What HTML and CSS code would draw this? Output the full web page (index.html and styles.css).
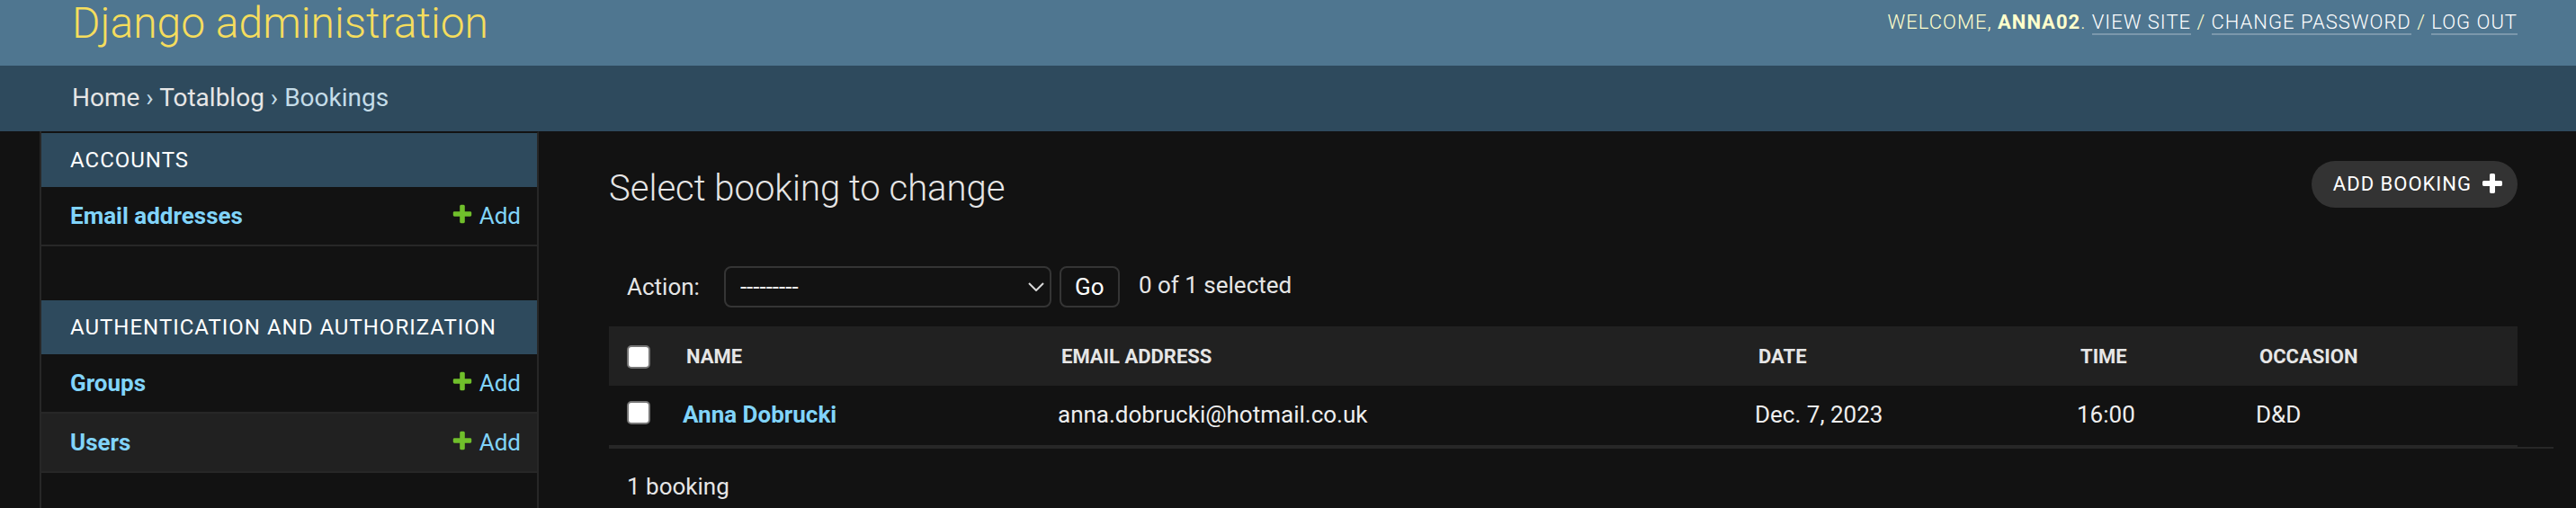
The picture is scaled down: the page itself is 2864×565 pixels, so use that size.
FILE: index.html
```html
<!DOCTYPE html>
<html lang="en">
<head>
<meta charset="utf-8">
<title>Select booking to change | Django site admin</title>
<link rel="stylesheet" href="styles.css">
</head>
<body>
<header class="header">
  <h1 class="site-name">Django administration</h1>
  <div class="user-tools">Welcome, <strong>anna02</strong>. <a href="#">View site</a> / <a href="#">Change password</a> / <a href="#">Log out</a></div>
</header>
<nav class="breadcrumbs"><a href="#">Home</a> &rsaquo; <a href="#">Totalblog</a> &rsaquo; Bookings</nav>
<div class="main">
  <button class="nav-toggle" aria-label="Toggle navigation"></button>
  <aside class="sidebar">
    <section class="module">
      <div class="module-caption">Accounts</div>
      <div class="model-row">
        <a class="model-link" href="#">Email addresses</a>
        <a class="addlink" href="#"><svg class="add-icon" width="26" height="26" viewBox="0 0 1792 1792"><path fill="#70bf2b" d="M1600 796v192q0 40-28 68t-68 28h-416v416q0 40-28 68t-68 28h-192q-40 0-68-28t-28-68v-416h-416q-40 0-68-28t-28-68v-192q0-40 28-68t68-28h416v-416q0-40 28-68t68-28h192q40 0 68 28t28 68v416h416q40 0 68 28t28 68z"/></svg>Add</a>
      </div>
    </section>
    <section class="module">
      <div class="module-caption">Authentication and Authorization</div>
      <div class="model-row">
        <a class="model-link" href="#">Groups</a>
        <a class="addlink" href="#"><svg class="add-icon" width="26" height="26" viewBox="0 0 1792 1792"><path fill="#70bf2b" d="M1600 796v192q0 40-28 68t-68 28h-416v416q0 40-28 68t-68 28h-192q-40 0-68-28t-28-68v-416h-416q-40 0-68-28t-28-68v-192q0-40 28-68t68-28h416v-416q0-40 28-68t68-28h192q40 0 68 28t28 68v416h416q40 0 68 28t28 68z"/></svg>Add</a>
      </div>
      <div class="model-row model-row-alt">
        <a class="model-link" href="#">Users</a>
        <a class="addlink" href="#"><svg class="add-icon" width="26" height="26" viewBox="0 0 1792 1792"><path fill="#70bf2b" d="M1600 796v192q0 40-28 68t-68 28h-416v416q0 40-28 68t-68 28h-192q-40 0-68-28t-28-68v-416h-416q-40 0-68-28t-28-68v-192q0-40 28-68t68-28h416v-416q0-40 28-68t68-28h192q40 0 68 28t28 68v416h416q40 0 68 28t28 68z"/></svg>Add</a>
      </div>
    </section>
  </aside>
  <main class="content">
    <div class="title-row">
      <h1 class="page-title">Select booking to change</h1>
      <a class="object-tool" href="#">Add booking<svg class="tool-icon" width="28" height="28" viewBox="0 0 1792 1792"><path fill="#ffffff" d="M1600 736v192q0 40-28 68t-68 28h-416v416q0 40-28 68t-68 28h-192q-40 0-68-28t-28-68v-416h-416q-40 0-68-28t-28-68v-192q0-40 28-68t68-28h416v-416q0-40 28-68t68-28h192q40 0 68 28t28 68v416h416q40 0 68 28t28 68z"/></svg></a>
    </div>
    <form class="changelist">
      <div class="actions">
        <label class="action-label" for="action">Action:</label>
        <div class="select-wrap">
          <select id="action" class="action-select"><option>---------</option><option>Delete selected bookings</option></select>
          <svg class="chevron" width="18" height="10" viewBox="0 0 18 10"><path d="M1 1l8 8 8-8" fill="none" stroke="#d8d8d8" stroke-width="2"/></svg>
        </div>
        <button type="button" class="go-button">Go</button>
        <span class="action-counter">0 of 1 selected</span>
      </div>
      <table class="results">
        <colgroup>
          <col class="col-check"><col class="col-name"><col class="col-email"><col class="col-date"><col class="col-time"><col class="col-occasion">
        </colgroup>
        <thead>
          <tr>
            <th class="check-cell"><input type="checkbox" class="checkbox" aria-label="Select all"></th>
            <th>Name</th>
            <th>Email address</th>
            <th>Date</th>
            <th>Time</th>
            <th>Occasion</th>
          </tr>
        </thead>
        <tbody>
          <tr>
            <td class="check-cell"><input type="checkbox" class="checkbox row-checkbox" aria-label="Select"></td>
            <td><a class="row-link" href="#">Anna Dobrucki</a></td>
            <td>anna.dobrucki@hotmail.co.uk</td>
            <td>Dec. 7, 2023</td>
            <td>16:00</td>
            <td>D&amp;D</td>
          </tr>
        </tbody>
      </table>
      <p class="paginator">1 booking</p>
    </form>
  </main>
</div>
</body>
</html>
```
FILE: styles.css
```css
* { box-sizing: border-box; }

html, body {
  margin: 0;
  padding: 0;
}

body {
  background: #121212;
  color: #eeeeee;
  font-family: Roboto, "Liberation Sans", Arial, sans-serif;
  font-size: 28px;
}

a { text-decoration: none; }

/* Header */
.header {
  display: flex;
  justify-content: space-between;
  align-items: flex-start;
  height: 73px;
  padding: 0 65px 0 80px;
  background: #4f7690;
}

.site-name {
  margin: 2px 0 0;
  font-size: 48px;
  line-height: 48px;
  font-weight: 300;
  color: #f5dd5d;
}

.user-tools {
  margin-top: 11px;
  font-size: 22px;
  line-height: 28px;
  font-weight: 300;
  letter-spacing: 1px;
  text-transform: uppercase;
  color: #ffffcc;
}

.user-tools strong { font-weight: 700; }

.user-tools a {
  color: #ffffff;
  border-bottom: 2px solid rgba(255, 255, 255, 0.25);
}

/* Breadcrumbs */
.breadcrumbs {
  height: 73px;
  padding: 16px 80px 0;
  background: #2e4a5d;
  font-size: 28px;
  line-height: 40px;
  color: #c4dce8;
}

.breadcrumbs a { color: #e6e6e6; }

/* Main */
.main {
  display: flex;
  min-height: calc(100vh - 146px);
}

.nav-toggle {
  flex: 0 0 46px;
  padding: 0;
  border: 0;
  border-right: 2px solid #272727;
  background: #121212;
}

.sidebar {
  flex: 0 0 553px;
  border-top: 2px solid transparent;
  border-right: 2px solid #272727;
}

.module { margin-bottom: 60px; }

.module-caption {
  height: 60px;
  padding: 16px 32px;
  background: #2e4a5d;
  font-size: 24px;
  line-height: 28px;
  letter-spacing: 1px;
  text-transform: uppercase;
  color: #ffffff;
}

.model-row {
  display: flex;
  justify-content: space-between;
  align-items: flex-start;
  height: 66px;
  padding: 16px 18px 0 32px;
  border-bottom: 2px solid #272727;
  font-size: 26px;
  line-height: 32px;
}

.model-row-alt { background: #212121; }

.model-link {
  color: #81d4fa;
  font-weight: 700;
}

.addlink {
  display: flex;
  align-items: flex-start;
  color: #81d4fa;
}

.add-icon {
  display: block;
  margin: 1px 6px 0 0;
}

/* Content */
.content {
  flex: 1;
  min-width: 0;
  padding: 42px 65px 0 78px;
}

.title-row {
  display: flex;
  justify-content: space-between;
  align-items: flex-start;
  height: 44px;
}

.page-title {
  margin: 0;
  font-size: 40px;
  line-height: 44px;
  font-weight: 300;
  color: #e6e6e6;
}

.object-tool {
  display: flex;
  align-items: center;
  height: 52px;
  margin-top: -9px;
  padding: 0 14px 0 24px;
  border-radius: 26px;
  background: #333333;
  color: #ffffff;
  font-size: 22px;
  line-height: 52px;
  letter-spacing: 1px;
  text-transform: uppercase;
}

.tool-icon {
  display: block;
  margin-left: 9px;
}

.changelist { margin: 38px 0 0; }

.actions {
  display: flex;
  align-items: center;
  padding: 26px 20px 21px;
  font-size: 26px;
  line-height: 46px;
  color: #e6e6e6;
}

.action-label { margin-right: 27px; }

.select-wrap {
  position: relative;
  width: 364px;
  height: 46px;
}

.action-select {
  -webkit-appearance: none;
  appearance: none;
  display: block;
  width: 100%;
  height: 100%;
  margin: 0;
  padding: 0 40px 0 16px;
  border: 2px solid #353535;
  border-radius: 8px;
  background: #121212;
  color: #eeeeee;
  font-family: inherit;
  font-size: 26px;
}

.chevron {
  position: absolute;
  right: 8px;
  top: 18px;
  pointer-events: none;
}

.go-button {
  height: 46px;
  width: 67px;
  margin: 0 0 0 9px;
  padding: 0;
  border: 2px solid #353535;
  border-radius: 8px;
  background: #121212;
  color: #ffffff;
  font-family: inherit;
  font-size: 26px;
}

.action-counter {
  margin-left: 21px;
  margin-top: -4px;
}

/* Results table */
.results {
  width: 100%;
  border-collapse: collapse;
  table-layout: fixed;
}

.col-check { width: 66px; }
.col-name { width: 417px; }
.col-email { width: 775px; }
.col-date { width: 358px; }
.col-time { width: 199px; }
.col-occasion { width: 307px; }

.results th {
  padding: 18px 20px 16px;
  background: #212121;
  font-size: 22px;
  line-height: 32px;
  font-weight: 700;
  text-align: left;
  text-transform: uppercase;
  color: #e6e6e6;
  white-space: nowrap;
}

.results td {
  padding: 16px 16px 18px;
  border-bottom: 2px solid #272727;
  font-size: 26px;
  line-height: 32px;
  color: #eeeeee;
  vertical-align: top;
  white-space: nowrap;
}

.results .check-cell { padding-left: 20px; }

.checkbox {
  -webkit-appearance: none;
  appearance: none;
  display: block;
  width: 26px;
  height: 26px;
  margin: 0;
  border: 2px solid #767676;
  border-radius: 5px;
  background: #ffffff;
}

.row-checkbox { margin-top: 1px; }

.row-link {
  color: #81d4fa;
  font-weight: 700;
}

.paginator {
  margin: 0 -40px 0 0;
  padding: 20px;
  border-top: 2px solid #272727;
  font-size: 26px;
  line-height: 44px;
  color: #e6e6e6;
}
```
